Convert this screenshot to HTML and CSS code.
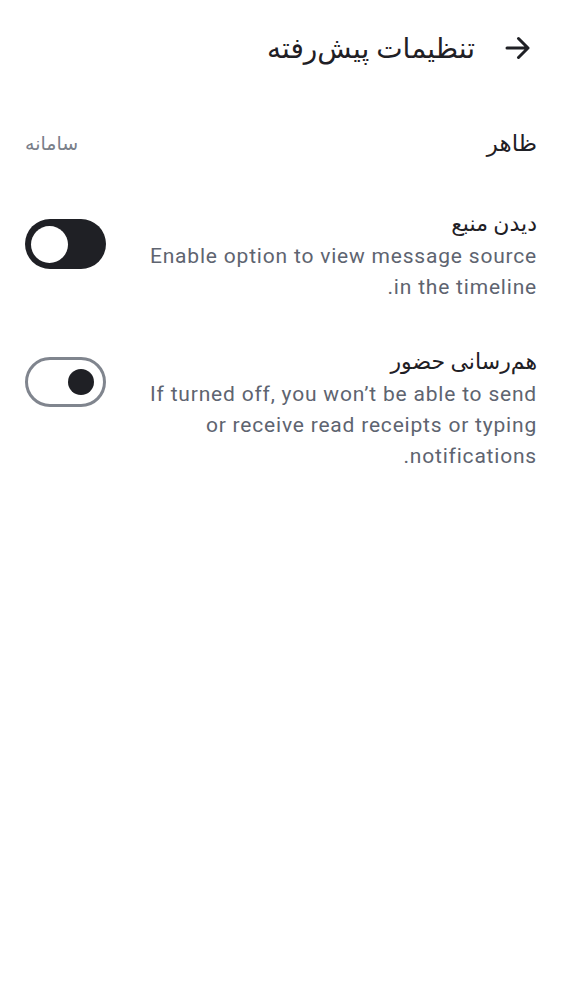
FILE: index.html
```html
<!DOCTYPE html>
<html lang="fa" dir="rtl">
<head>
<meta charset="utf-8">
<title>تنظیمات پیش‌رفته</title>
<link rel="stylesheet" href="styles.css">
</head>
<body>
<div class="page">
  <header class="header">
    <button class="back" aria-label="بازگشت">
      <svg viewBox="0 0 26 26" width="26" height="26" aria-hidden="true">
        <path d="M2 13H23M13.5 3.5L23 13L13.5 22.5" fill="none" stroke="#1f2025" stroke-width="3" stroke-linecap="round" stroke-linejoin="round"/>
      </svg>
    </button>
    <h1 class="title">تنظیمات پیش‌رفته</h1>
  </header>

  <div class="row-simple">
    <span class="row-label">ظاهر</span>
    <span class="row-value">سامانه</span>
  </div>

  <div class="item">
    <div class="item-text">
      <div class="item-title">دیدن منبع</div>
      <div class="item-desc">Enable option to view message source in the timeline.</div>
    </div>
    <div class="switch on"><span class="knob"></span></div>
  </div>

  <div class="item">
    <div class="item-text">
      <div class="item-title">هم‌رسانی حضور</div>
      <div class="item-desc">If turned off, you won’t be able to send or receive read receipts or typing notifications.</div>
    </div>
    <div class="switch off"><span class="knob"></span></div>
  </div>
</div>
</body>
</html>
```
FILE: styles.css
```css
html, body {
  margin: 0;
  padding: 0;
  background: #ffffff;
}
body {
  font-family: Roboto, "DejaVu Sans", sans-serif;
  color: #1f2025;
}
.page {
  padding: 0 25px;
}
.header {
  height: 96px;
  display: flex;
  align-items: center;
  gap: 24px;
}
.back {
  border: 0;
  background: none;
  padding: 0;
  width: 38px;
  height: 38px;
  display: flex;
  align-items: center;
  justify-content: center;
  cursor: pointer;
}
.title {
  margin: 0;
  font-size: 28px;
  font-weight: 400;
}
.row-simple {
  display: flex;
  justify-content: space-between;
  align-items: center;
  height: 46px;
  margin-top: 24px;
}
.row-label {
  font-size: 23px;
}
.row-value {
  font-size: 19px;
  color: #7a808a;
}
.item {
  display: flex;
  align-items: flex-start;
  gap: 36px;
  margin-top: 41px;
}
.item + .item {
  margin-top: 42px;
}
.item-text {
  flex: 1;
}
.item-title {
  font-size: 22px;
  line-height: 34px;
}
.item-desc {
  font-size: 21px;
  line-height: 31px;
  letter-spacing: 0.8px;
  color: #5e6470;
}
.switch {
  flex: none;
  box-sizing: border-box;
  width: 81px;
  height: 50px;
  border-radius: 25px;
  margin-top: 12px;
  display: flex;
  align-items: center;
}
.switch.on {
  background: #1f2025;
  justify-content: flex-end;
  padding: 0 6px;
}
.switch.on .knob {
  width: 37px;
  height: 37px;
  border-radius: 50%;
  background: #ffffff;
}
.switch.off {
  border: 3px solid #80858e;
  background: #ffffff;
  justify-content: flex-start;
  padding: 0 9px;
}
.switch.off .knob {
  width: 26px;
  height: 26px;
  border-radius: 50%;
  background: #1f2025;
}
```
